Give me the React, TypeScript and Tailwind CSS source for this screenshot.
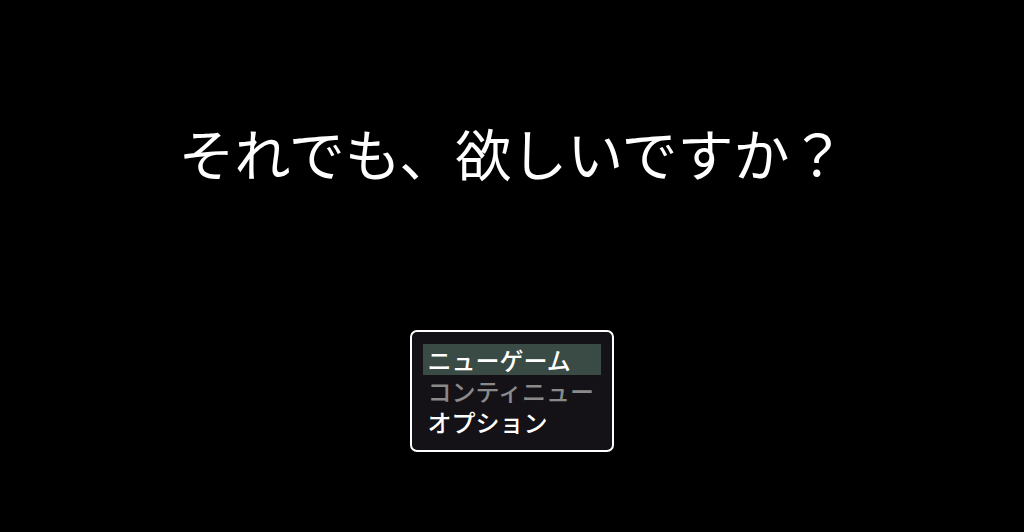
export default function App() {
  const items = [
    { label: "ニューゲーム", active: true, disabled: false },
    { label: "コンティニュー", active: false, disabled: true },
    { label: "オプション", active: false, disabled: false },
  ];

  return (
    <div
      className="w-full h-[532px] bg-black flex flex-col items-center overflow-hidden"
      style={{ fontFamily: '"Noto Sans CJK JP", "Noto Sans", sans-serif' }}
    >
      <h1 className="mt-[124px] text-[56px] leading-[56px] text-white font-normal whitespace-nowrap">
        それでも、欲しいですか？
      </h1>
      <div className="mt-[150px] mr-[1px] w-[204px] h-[122px] border-2 border-white rounded-[7px] bg-[#141216] px-[11px] pt-[12px]">
        {items.map((item) => (
          <div
            key={item.label}
            className={`h-[31px] pl-[5px] text-[24px] leading-[31px] font-medium whitespace-nowrap ${
              item.active ? "bg-[#3a4a44]" : ""
            } ${item.disabled ? "text-[#8a8a8a]" : "text-white"}`}
          >
            {item.label}
          </div>
        ))}
      </div>
    </div>
  );
}
